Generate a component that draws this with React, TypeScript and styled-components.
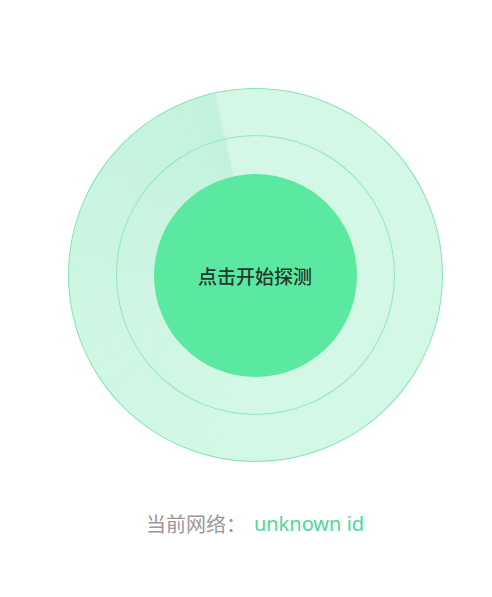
import React from 'react';
import styled, { createGlobalStyle } from 'styled-components';

/* ── page reset ─────────────────────────────────────────── */
const Global = createGlobalStyle`
  html, body {
    margin: 0;
    background: #ffffff;
    font-family: 'Noto Sans', 'Noto Sans CJK SC', sans-serif;
  }
`;

/* ── layout wrappers ───────────────────────────────────── */
const Page = styled.main`
  display: flex;
  flex-direction: column;
  align-items: center;
  width: 492px;
  box-sizing: border-box;
  padding: 88px 0 0 18px;
`;

/* ── radar: outer disc with a sweep, ring, core ────────── */
const Radar = styled.div`
  width: 375px;
  height: 374px;
  box-sizing: border-box;
  border-radius: 50%;
  border: 1px solid #86e3b9;
  background: conic-gradient(
    from 0deg,
    #d4f8e5 0deg,
    #d3f8e5 190deg,
    #cef6e2 260deg,
    #c8f4df 310deg,
    #c2f2dd 347deg,
    #d4f8e5 348deg
  );
  display: flex;
  align-items: center;
  justify-content: center;
`;

const Ring = styled.div`
  width: 279px;
  height: 280px;
  box-sizing: border-box;
  border-radius: 50%;
  border: 1px solid #92e6c0;
  display: flex;
  align-items: center;
  justify-content: center;
`;

const Core = styled.button`
  width: 203px;
  height: 203px;
  border: none;
  border-radius: 50%;
  background: #5be8a0;
  display: flex;
  align-items: center;
  justify-content: center;
  padding: 0;
  cursor: pointer;
  font-family: 'Noto Sans CJK SC', sans-serif;
  font-size: 19px;
  font-weight: 500;
  color: #26392f;
`;

/* ── network status line ───────────────────────────────── */
const Status = styled.p`
  margin: 48px 0 0;
  display: flex;
  align-items: center;
  line-height: 28px;
  font-size: 20px;
`;

const Label = styled.span`
  font-family: 'Noto Sans CJK SC', sans-serif;
  color: #999999;
  margin-right: 8px;
`;

const Value = styled.span`
  font-family: 'Noto Sans', sans-serif;
  font-size: 20px;
  color: #4fd898;
`;

/* ── component ─────────────────────────────────────────── */
const App: React.FC = () => (
  <>
    <Global />
    <Page>
      <Radar>
        <Ring>
          <Core>点击开始探测</Core>
        </Ring>
      </Radar>

      <Status>
        <Label>当前网络：</Label>
        <Value>unknown id</Value>
      </Status>
    </Page>
  </>
);

export default App;
